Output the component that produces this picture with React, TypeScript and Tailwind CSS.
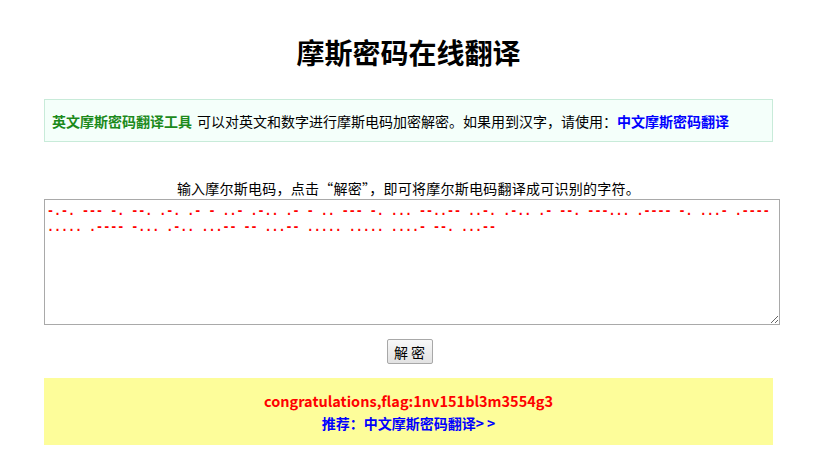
const morse =
  '-.-. --- -. --. .-. .- - ..- .-.. .- - .. --- -. ... --..-- ..-. .-.. .- --. ---... .---- -. ...- .---- ..... .---- -... .-.. ...-- -- ...-- ..... ..... ....- --. ...--';

export default function App() {
  return (
    <div className="min-h-[457px] bg-white font-['Noto_Sans_CJK_SC',sans-serif] text-[14px] text-black">
      <div className="mx-[44px] w-[729px]">
        <h1 className="pt-[32px] pb-[27px] text-center text-[28px] leading-[40px] font-bold">摩斯密码在线翻译</h1>

        <div className="h-[43px] flex items-center border border-[#c8ebd9] bg-[#f4fffa] pl-[7px] leading-[20px]">
          <span className="font-bold text-[#1b8a1b]">英文摩斯密码翻译工具</span>
          <span className="ml-[5px]">可以对英文和数字进行摩斯电码加密解密。如果用到汉字，请使用：</span>
          <a className="font-bold text-[#0000ff]" href="#">
            中文摩斯密码翻译
          </a>
        </div>

        <p className="mt-[36px] text-center leading-[20px] tracking-[0.25px]">
          输入摩尔斯电码，点击“解密”，即可将摩尔斯电码翻译成可识别的字符。
        </p>
      </div>

      <div className="ml-[44px] mt-[1px] w-[736px]">
        <textarea
          className="block h-[126px] w-full resize border border-[#a9a9a9] px-[2px] pt-[3px] font-['DejaVu_Sans_Mono',monospace] text-[11.67px] leading-[16px] font-bold text-[#ff0000] outline-none"
          defaultValue={morse}
        />
      </div>

      <div className="flex justify-center pt-[14px] pb-[14px] pr-[6px]">
        <button className="h-[25px] w-[46px] rounded-[2px] border border-[#a8a8a8] bg-gradient-to-b from-[#f8f8f8] to-[#e2e2e2] text-[14px] leading-[20px] tracking-[3px] pl-[3px]">
          解密
        </button>
      </div>

      <div className="mx-[44px] flex h-[67px] w-[729px] flex-col items-center justify-center bg-[#fdfd9a]">
        <div className="text-[14.5px] leading-[22px] font-bold text-[#ff0000]">congratulations,flag:1nv151bl3m3554g3</div>
        <a className="mt-[1px] text-[14px] leading-[20px] font-bold text-[#0000ff]" href="#">
          推荐：中文摩斯密码翻译&gt; &gt;
        </a>
      </div>
    </div>
  );
}
